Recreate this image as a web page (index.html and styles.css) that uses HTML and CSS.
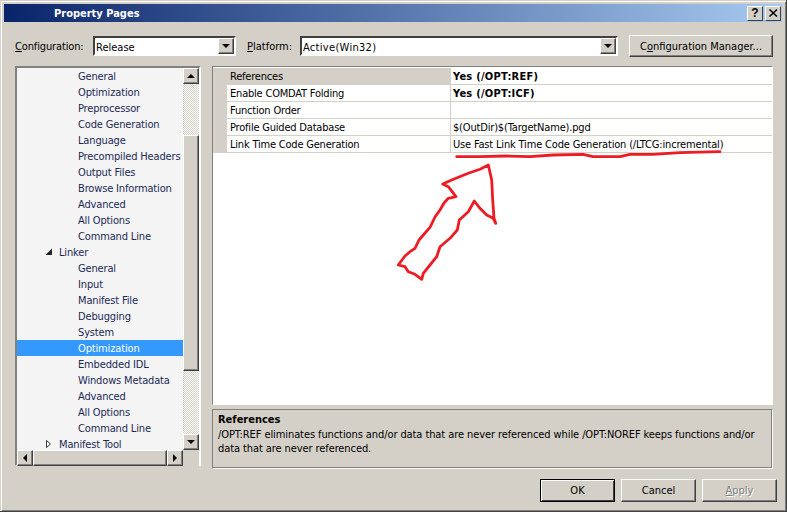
FILE: index.html
```html
<!DOCTYPE html>
<html>
<head>
    <meta charset="UTF-8">
    <title>Property Pages</title>
    <link rel="stylesheet" href="styles.css">
</head>
<body>
    <div class="dialog">
        <div class="titlebar">
            <span class="title">Property Pages</span>
            <div class="caption-btns">
                <button class="caption-btn help">?</button>
                <button class="caption-btn">
                    <svg width="9" height="8" viewBox="0 0 9 8"><path d="M0.5 0.5 L8 7.5 M8 0.5 L0.5 7.5" stroke="#000" stroke-width="1.5" fill="none"/></svg>
                </button>
            </div>
        </div>

        <div class="config-row">
            <label class="config-label"><u>C</u>onfiguration:</label>
            <div class="combo combo-config">
                <span class="combo-value">Release</span>
                <span class="btn3d combo-arrow"><i class="tri tri-down"></i></span>
            </div>
            <label class="platform-label"><u>P</u>latform:</label>
            <div class="combo combo-platform">
                <span class="combo-value">Active(Win32)</span>
                <span class="btn3d combo-arrow"><i class="tri tri-down"></i></span>
            </div>
            <button class="btn3d push manager">C<u>o</u>nfiguration Manager...</button>
        </div>

        <div class="main">
            <div class="tree-box">
                <div class="tree-top">
                    <div class="tree">
                        <div class="node lvl2">General</div>
                        <div class="node lvl2">Optimization</div>
                        <div class="node lvl2">Preprocessor</div>
                        <div class="node lvl2">Code Generation</div>
                        <div class="node lvl2">Language</div>
                        <div class="node lvl2">Precompiled Headers</div>
                        <div class="node lvl2">Output Files</div>
                        <div class="node lvl2">Browse Information</div>
                        <div class="node lvl2">Advanced</div>
                        <div class="node lvl2">All Options</div>
                        <div class="node lvl2">Command Line</div>
                        <div class="node lvl1">
                            <svg class="expander" width="8" height="8" viewBox="0 0 8 8"><path d="M7 0.5 L7 7 L0.5 7 Z" fill="#222"/></svg>Linker
                        </div>
                        <div class="node lvl2">General</div>
                        <div class="node lvl2">Input</div>
                        <div class="node lvl2">Manifest File</div>
                        <div class="node lvl2">Debugging</div>
                        <div class="node lvl2">System</div>
                        <div class="node lvl2 selected">Optimization</div>
                        <div class="node lvl2">Embedded IDL</div>
                        <div class="node lvl2">Windows Metadata</div>
                        <div class="node lvl2">Advanced</div>
                        <div class="node lvl2">All Options</div>
                        <div class="node lvl2">Command Line</div>
                        <div class="node lvl1">
                            <svg class="expander" width="8" height="8" viewBox="0 0 8 8"><path d="M1.5 0.5 L5.5 4 L1.5 7.5 Z" fill="#fff" stroke="#333"/></svg>Manifest Tool
                        </div>
                    </div>
                    <div class="vscroll">
                        <span class="btn3d sb-btn"><i class="tri tri-up"></i></span>
                        <div class="track track-a"></div>
                        <div class="btn3d vthumb"></div>
                        <div class="track track-b"></div>
                        <span class="btn3d sb-btn"><i class="tri tri-down"></i></span>
                    </div>
                </div>
                <div class="hscroll">
                    <span class="btn3d sb-btn"><i class="tri tri-left"></i></span>
                    <div class="btn3d hthumb"></div>
                    <span class="btn3d sb-btn"><i class="tri tri-right"></i></span>
                    <div class="corner"></div>
                </div>
            </div>

            <div class="right">
                <div class="grid-box">
                    <div class="prop selected">
                        <div class="prop-name">References</div>
                        <div class="prop-value bold">Yes (/OPT:REF)</div>
                    </div>
                    <div class="prop">
                        <div class="prop-name">Enable COMDAT Folding</div>
                        <div class="prop-value bold">Yes (/OPT:ICF)</div>
                    </div>
                    <div class="prop">
                        <div class="prop-name">Function Order</div>
                        <div class="prop-value"></div>
                    </div>
                    <div class="prop">
                        <div class="prop-name">Profile Guided Database</div>
                        <div class="prop-value">$(OutDir)$(TargetName).pgd</div>
                    </div>
                    <div class="prop">
                        <div class="prop-name">Link Time Code Generation</div>
                        <div class="prop-value">Use Fast Link Time Code Generation (/LTCG:incremental)</div>
                    </div>
                </div>
                <div class="desc-box">
                    <div class="desc-title">References</div>
                    <div class="desc-text">/OPT:REF eliminates functions and/or data that are never referenced while /OPT:NOREF keeps functions and/or data that are never referenced.</div>
                </div>
            </div>
        </div>

        <div class="footer">
            <button class="btn3d push default">OK</button>
            <button class="btn3d push">Cancel</button>
            <button class="btn3d push disabled"><u>A</u>pply</button>
        </div>

        <svg class="scribble" width="787" height="512" viewBox="0 0 787 512">
            <path class="underline" d="M456.7 156.7 L480 156.7 L506.7 156 L530 156.7 L553 155 L583 154.3 L593 156.7 L620 156.7 L630 154.3 L653 154.3 L680 152.7 L720 151.7"/>
            <path d="M398.3 265 L405 256 L410 251.7 L415 248.3 L419 240 L423.3 235 L430 227.3 L435 217 L440 210 L444 203 L448.3 198.3 L456 196.7 L448.3 186.7 L442.7 184 L451.7 180 L468.3 173.3 L480 169.3 L488.3 165 L491.7 180 L492.7 200 L494 218.3 L495.7 223.3 L493.3 218.3 L486.7 215 L480 208.3 L474.3 201 L468.3 211.7 L459.3 220 L457.3 230 L450 238.3 L440 246.7 L436.7 256.7 L430 265 L423.3 273.3 L421.7 279.3 L415 274.3 L408.3 271.7 L405 266.7 Z"/>
        </svg>
    </div>
</body>
</html>
```

FILE: styles.css
```css
* {
    margin: 0;
    padding: 0;
    box-sizing: border-box;
}

body {
    font-family: "DejaVu Sans Condensed", "Liberation Sans", sans-serif;
    font-size: 11px;
    color: #000;
    background: #d4d0c8;
}

.dialog {
    position: relative;
    width: 787px;
    height: 512px;
    padding: 4px 4px 0;
    background: #d4d0c8;
    border-right: 1px solid #404040;
    border-bottom: 1px solid #404040;
    box-shadow: inset 1px 1px 0 #d4d0c8, inset 2px 2px 0 #fff, inset -1px -1px 0 #808080;
    overflow: hidden;
}

.titlebar {
    height: 18px;
    display: flex;
    align-items: center;
    justify-content: space-between;
    background: linear-gradient(90deg, #0a246a, #a6caf0);
    color: white;
    padding: 0 1px 0 50px;
}

.title {
    font-weight: bold;
    font-size: 11px;
}

.caption-btns {
    display: flex;
    gap: 2px;
}

.caption-btn {
    width: 16px;
    height: 15px;
    background: #d4d0c8;
    border: 1px solid;
    border-color: #fff #404040 #404040 #fff;
    font: bold 12px "Liberation Sans", sans-serif;
    display: flex;
    align-items: center;
    justify-content: center;
}

.btn3d {
    background: #d4d0c8;
    border: 1px solid;
    border-color: #fff #404040 #404040 #fff;
    box-shadow: inset -1px -1px 0 #808080;
}

.config-row {
    display: flex;
    align-items: center;
    height: 22px;
    margin-top: 13px;
    padding-left: 11px;
}

.config-label {
    width: 78px;
    letter-spacing: -0.14px;
}

.platform-label {
    width: 53px;
    margin-left: 11px;
}

.combo {
    height: 20px;
    display: flex;
    align-items: center;
    justify-content: space-between;
    background: #fff;
    border: 2px solid;
    border-color: #404040 #fff #fff #404040;
}

.combo-config {
    width: 143px;
}

.combo-platform {
    width: 318px;
}

.combo-value {
    padding: 2px 0 0 1px;
}

.combo-platform .combo-value {
    letter-spacing: 0.3px;
}

.combo-arrow {
    width: 16px;
    height: 16px;
    display: flex;
    align-items: center;
    justify-content: center;
}

.tri {
    display: block;
    width: 0;
    height: 0;
    border-style: solid;
    border-color: transparent;
}

.tri-down {
    border-width: 4px 4px 0;
    border-top-color: #000;
}

.tri-up {
    border-width: 0 4px 4px;
    border-bottom-color: #000;
}

.tri-left {
    border-width: 4px 4px 4px 0;
    border-right-color: #000;
}

.tri-right {
    border-width: 4px 0 4px 4px;
    border-left-color: #000;
}

.push {
    font: inherit;
    color: #000;
}

.manager {
    width: 144px;
    height: 22px;
    margin-left: 11px;
}

.main {
    display: flex;
    margin-top: 9px;
    padding-left: 11px;
}

.tree-box {
    width: 186px;
    height: 400px;
    border: 2px solid;
    border-color: #808080 #fff #fff #808080;
    box-shadow: inset 1px 1px 0 #404040;
    display: flex;
    flex-direction: column;
}

.tree-top {
    display: flex;
    height: 382px;
}

.tree {
    width: 166px;
    background: #f4f4f4;
    overflow: hidden;
    color: #1b2a56;
    letter-spacing: -0.15px;
}

.node {
    height: 16px;
    padding-top: 1px;
    line-height: 16px;
    white-space: nowrap;
    position: relative;
}

.lvl1 {
    padding-left: 42px;
}

.lvl2 {
    padding-left: 61px;
}

.node.selected {
    background: #3399ff;
    color: #fff;
}

.expander {
    position: absolute;
    left: 28px;
    top: 4px;
}

.vscroll {
    width: 16px;
    display: flex;
    flex-direction: column;
}

.sb-btn {
    flex: none;
    width: 16px;
    height: 16px;
    display: flex;
    align-items: center;
    justify-content: center;
}

.track {
    background-color: #fff;
    background-image: conic-gradient(#d4d0c8 25%, #fff 0 50%, #d4d0c8 0 75%, #fff 0);
    background-size: 2px 2px;
}

.track-a {
    height: 51px;
}

.vthumb {
    height: 236px;
}

.track-b {
    flex: 1;
}

.hscroll {
    display: flex;
    height: 16px;
}

.hthumb {
    width: 134px;
}

.corner {
    width: 16px;
    background: #d4d0c8;
}

.right {
    width: 561px;
    margin-left: 11px;
}

.grid-box {
    height: 339px;
    background: #fff;
    border: 1px solid;
    border-color: #808080 #fff #fff #808080;
    padding-top: 1px;
}

.prop {
    display: flex;
    height: 17px;
    padding-left: 14px;
    background: #d4d0c8;
}

.prop-name {
    width: 224px;
    padding: 1px 0 0 3px;
    line-height: 16px;
    background: #fff;
    border-bottom: 1px solid #d4d0c8;
    border-right: 1px solid #d4d0c8;
    letter-spacing: -0.2px;
}

.prop-value {
    flex: 1;
    padding: 1px 0 0 2px;
    line-height: 16px;
    background: #fff;
    border-bottom: 1px solid #d4d0c8;
    white-space: nowrap;
    letter-spacing: -0.17px;
}

.prop.selected .prop-name {
    background: #d4d0c8;
}

.prop-value.bold {
    font-weight: bold;
    letter-spacing: 0.25px;
}

.desc-box {
    height: 60px;
    margin-top: 4px;
    padding: 3px 5px;
    border: 1px solid;
    border-color: #808080 #fff #fff #808080;
    box-shadow: inset -1px -1px 0 #808080;
    line-height: 14px;
}

.desc-title {
    font-weight: bold;
    margin-bottom: 1px;
}

.desc-text {
    letter-spacing: -0.09px;
}

.footer {
    display: flex;
    justify-content: flex-end;
    gap: 6px;
    margin-top: 10px;
    padding-right: 5px;
}

.footer .push {
    width: 75px;
    height: 23px;
}

.footer .default {
    border-color: #000;
    box-shadow: inset 1px 1px 0 #fff, inset -1px -1px 0 #404040;
}

.disabled {
    color: #808080;
    text-shadow: 1px 1px 0 #fff;
}

.scribble {
    position: absolute;
    left: 0;
    top: 0;
    pointer-events: none;
}

.scribble path {
    fill: none;
    stroke: #ed1c24;
    stroke-width: 2.8;
    stroke-linejoin: round;
    stroke-linecap: round;
}
```
